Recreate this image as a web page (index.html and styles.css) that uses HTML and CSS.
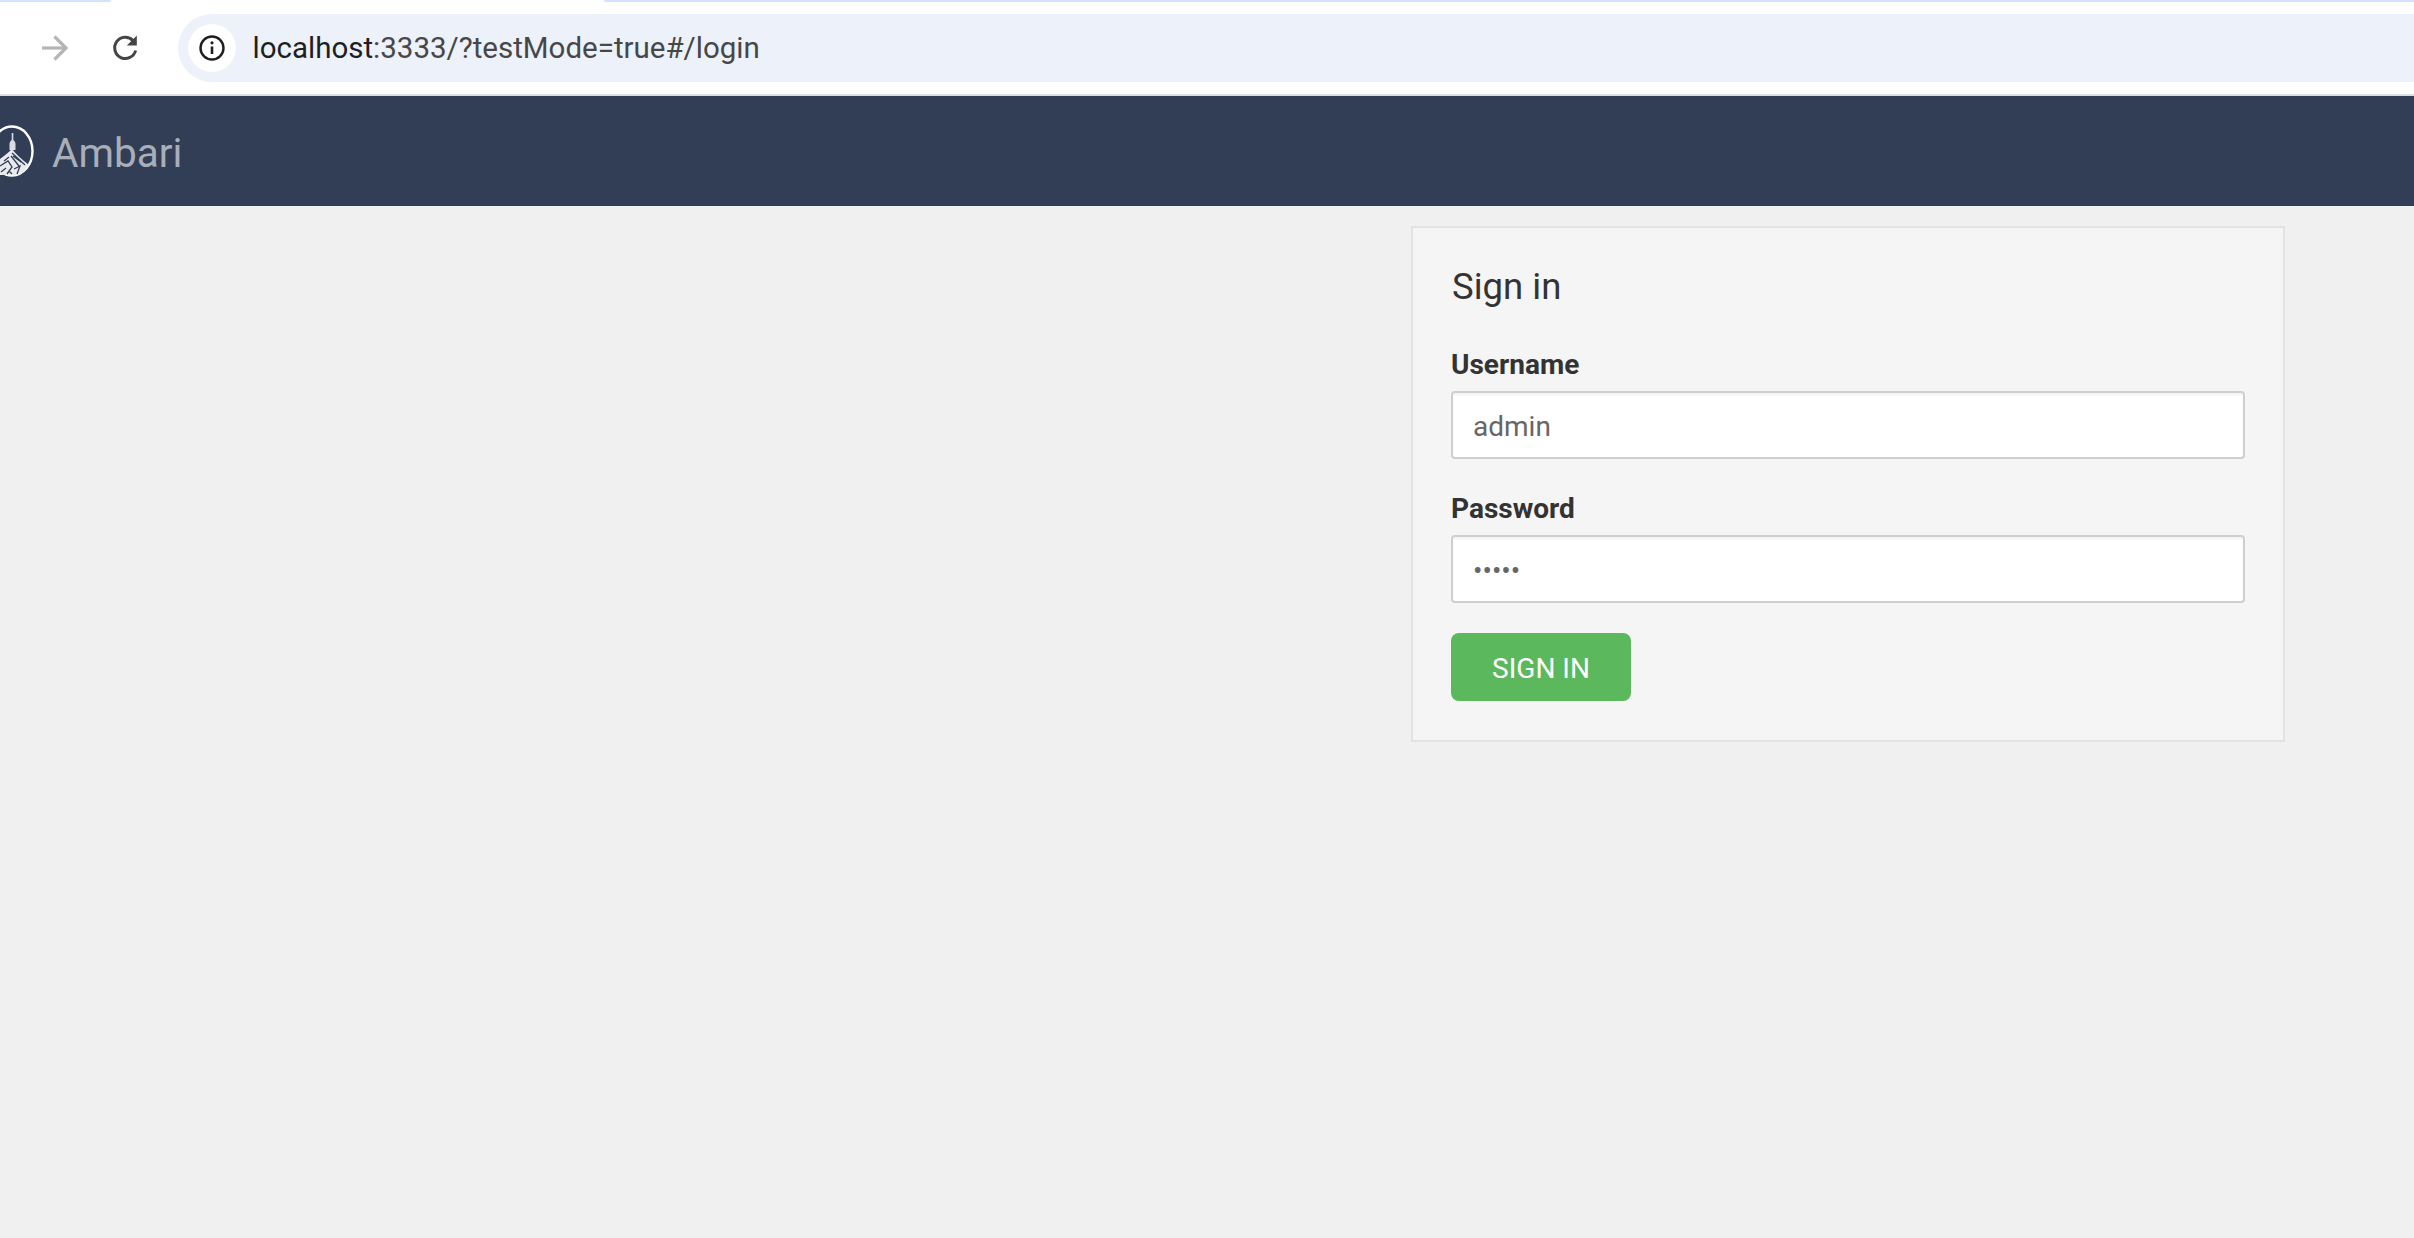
FILE: index.html
```html
<!DOCTYPE html>
<html lang="en">
<head>
<meta charset="utf-8">
<title>Ambari</title>
<link rel="stylesheet" href="styles.css">
</head>
<body>
<div class="tabstrip">
  <div class="tab-blue tab-left"></div>
  <div class="tab-blue tab-right"></div>
</div>
<div class="toolbar">
  <svg class="ico-forward" width="30" height="30" viewBox="0 0 30 30" fill="none" stroke="#b4b5b6" stroke-width="3.2">
    <path d="M2 15H26"/><path d="M14.5 3.5L26 15L14.5 26.5"/>
  </svg>
  <svg class="ico-reload" width="28" height="28" viewBox="0 0 28 28" fill="none">
    <path d="M23.6 16.5A10.6 10.6 0 1 1 21 6.6" stroke="#454545" stroke-width="3"/>
    <path d="M24.8 1.5V11.5H14.8Z" fill="#454545"/>
  </svg>
  <div class="omnibox">
    <span class="info-chip">
      <svg width="26" height="26" viewBox="0 0 26 26" fill="none">
        <circle cx="13" cy="13" r="11.5" stroke="#1f1f1f" stroke-width="2.4"/>
        <path d="M13 11.5V19" stroke="#1f1f1f" stroke-width="2.6"/>
        <circle cx="13" cy="7.8" r="1.6" fill="#1f1f1f"/>
      </svg>
    </span>
    <span class="url"><span class="url-host">localhost</span>:3333/?testMode=true#/login</span>
  </div>
</div>
<header class="navbar">
  <svg class="logo" width="34" height="52" viewBox="0 0 34 52" fill="none">
    <ellipse cx="12" cy="26" rx="20.5" ry="24.5" stroke="#fff" stroke-width="2.4"/>
    <path d="M12.5 8V15" stroke="#d9dce2" stroke-width="1.6"/>
    <path d="M9.5 25V19C9.5 17 11 15.5 12.5 14C14 15.5 15.5 17 15.5 19V25Z" fill="#d9dce2"/>
    <path d="M12 24C8 28 2 33 -6 38L-4 50H20C23 47 26 44 29 40C22 35 16 29 12 24Z" fill="#e8eaee"/>
    <path d="M12 28L25 40M11 31L19 41M13 31L21 37M4 36L9 32M0 41L8 36L12 42L7 49M14 44L20 41L17 49M1 47L6 43M9 46L12 49" stroke="#323e56" stroke-width="1.3"/>
  </svg>
  <span class="brand">Ambari</span>
</header>
<main class="content">
  <form class="card">
    <h4 class="card-title">Sign in</h4>
    <div class="field field-user">
      <label class="field-label" for="user">Username</label>
      <input class="field-input" id="user" type="text" value="admin">
    </div>
    <div class="field field-pass">
      <label class="field-label" for="pass">Password</label>
      <input class="field-input" id="pass" type="password" value="admin">
    </div>
    <button class="btn-signin" type="button">SIGN IN</button>
  </form>
</main>
</body>
</html>
```
FILE: styles.css
```css
* { box-sizing: border-box; }
html, body { margin: 0; height: 100%; overflow: hidden; }
body {
  background: #f0f0f0;
  font-family: Roboto, "Liberation Sans", sans-serif;
  color: #2f2f2f;
  display: flex;
  flex-direction: column;
}
.tabstrip {
  height: 2px;
  background: #fff;
  display: flex;
  justify-content: space-between;
  flex: none;
}
.tab-blue { height: 2px; background: #d3e3fd; }
.tab-left { width: 111px; border-bottom-right-radius: 6px; }
.tab-right { width: 1810px; border-bottom-left-radius: 6px; }
.toolbar {
  height: 92px;
  background: #fff;
  display: flex;
  align-items: flex-start;
  padding-top: 12px;
  flex: none;
}
.ico-forward { margin: 19px 0 0 40px; }
.ico-reload { margin: 20px 0 0 42px; }
.omnibox {
  flex: 1;
  height: 68px;
  margin-left: 38px;
  margin-right: -40px;
  background: #ecf1fa;
  border-radius: 34px;
  display: flex;
  align-items: center;
  padding-left: 10px;
}
.info-chip {
  width: 48px;
  height: 48px;
  border-radius: 50%;
  background: #fff;
  display: flex;
  align-items: center;
  justify-content: center;
}
.url {
  margin-left: 16.5px;
  font-size: 29.5px;
  color: #474747;
}
.url-host { color: #1f1f1f; }
.navbar {
  height: 112px;
  flex: none;
  background: #323e56;
  border-top: 2px solid #dfe0e2;
  display: flex;
  align-items: center;
}
.logo { flex: none; }
.brand {
  margin-left: 18px;
  padding-top: 3px;
  font-size: 40.5px;
  font-weight: 400;
  color: #a9afba;
}
.content {
  flex: 1;
  padding: 20px 129px 0 0;
  display: flex;
  justify-content: flex-end;
  align-items: flex-start;
}
.card {
  width: 874px;
  height: 516px;
  background: #f5f5f5;
  border: 2px solid #e3e3e3;
  padding: 0 38px;
}
.card-title {
  margin: 39px 0 0 1px;
  font-size: 36.5px;
  line-height: 40px;
  font-weight: 400;
  color: #333;
}
.field { display: flex; flex-direction: column; }
.field-user { margin-top: 38px; }
.field-pass { margin-top: 30px; }
.field-label {
  font-size: 28px;
  line-height: 40px;
  font-weight: 700;
  color: #333;
  margin-bottom: 6px;
}
.field-input {
  width: 100%;
  height: 68px;
  border: 2px solid #ccd0d5;
  border-radius: 4px;
  background: #fff;
  padding: 2px 20px 0;
  font: 400 28px Roboto, sans-serif;
  color: #666;
  box-shadow: inset 0 2px 2px rgba(0,0,0,.05);
  outline: none;
}
.btn-signin {
  display: block;
  margin-top: 30px;
  width: 180px;
  height: 68px;
  border: 0;
  border-radius: 8px;
  background: #5cb85c;
  color: #fff;
  font: 400 28px Roboto, sans-serif;
  padding: 2px 0 0;
}
```
